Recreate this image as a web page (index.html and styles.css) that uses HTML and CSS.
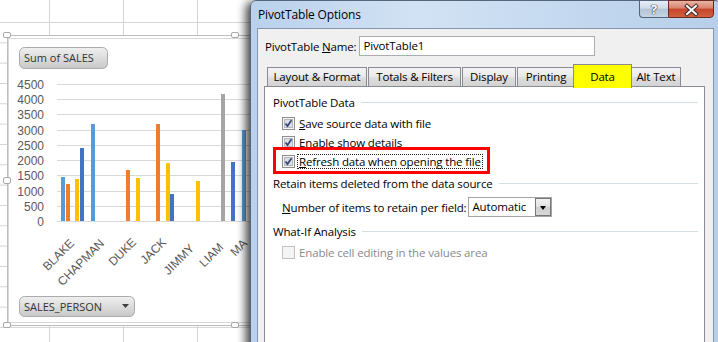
FILE: index.html
```html
<!DOCTYPE html>
<html lang="en">
  <head>
    <meta charset="UTF-8" />
    <meta name="viewport" content="width=device-width, initial-scale=1.0" />
    <title>PivotTable Options</title>
    <link rel="stylesheet" href="styles.css">
  </head>
  <body>
    <div class="screen">
      <div class="sheet-rows"></div>

      <!-- pivot chart sitting on the sheet -->
      <svg class="chart" width="262" height="342" viewBox="0 0 262 342">
        <defs>
          <linearGradient id="fieldBtn" x1="0" y1="0" x2="0" y2="1">
            <stop offset="0" stop-color="#f0f0f0" />
            <stop offset="1" stop-color="#c8c8c8" />
          </linearGradient>
        </defs>
        <rect x="7.5" y="35.5" width="460" height="290" fill="#fff" stroke="#bdbdbd" />
        <rect x="8.5" y="38.5" width="458" height="284" fill="none" stroke="#d9d9d9" />

        <rect class="handle" x="3.5" y="32.5" width="7" height="5" rx="1.5" />
        <rect class="handle" x="231.5" y="32.5" width="7" height="5" rx="1.5" />
        <rect class="handle" x="3.5" y="177.5" width="7" height="6" rx="1.5" />
        <rect class="handle" x="3.5" y="322.5" width="7" height="5" rx="1.5" />
        <rect class="handle" x="231.5" y="322.5" width="7" height="5" rx="1.5" />

        <rect x="19.5" y="47.5" width="88" height="21" rx="5" fill="url(#fieldBtn)" stroke="#ababab" />
        <text class="field-text" x="24" y="62">Sum of SALES</text>

        <g class="grid">
          <line x1="57" y1="84.5" x2="262" y2="84.5" />
          <line x1="57" y1="99.5" x2="262" y2="99.5" />
          <line x1="57" y1="114.5" x2="262" y2="114.5" />
          <line x1="57" y1="130.5" x2="262" y2="130.5" />
          <line x1="57" y1="145.5" x2="262" y2="145.5" />
          <line x1="57" y1="160.5" x2="262" y2="160.5" />
          <line x1="57" y1="175.5" x2="262" y2="175.5" />
          <line x1="57" y1="191.5" x2="262" y2="191.5" />
          <line x1="57" y1="206.5" x2="262" y2="206.5" />
          <line x1="57" y1="221.5" x2="262" y2="221.5" />
        </g>

        <g class="axis-text" text-anchor="end">
          <text x="44" y="89">4500</text>
          <text x="44" y="104">4000</text>
          <text x="44" y="119">3500</text>
          <text x="44" y="135">3000</text>
          <text x="44" y="150">2500</text>
          <text x="44" y="165">2000</text>
          <text x="44" y="180">1500</text>
          <text x="44" y="196">1000</text>
          <text x="44" y="211">500</text>
          <text x="44" y="226">0</text>
        </g>

        <g class="bars">
          <rect class="s1" x="61" y="177" width="4" height="44" />
          <rect class="s2" x="66" y="184" width="4" height="37" />
          <rect class="s4" x="75" y="179" width="4" height="42" />
          <rect class="s5" x="80" y="148" width="4" height="73" />
          <rect class="s1" x="91" y="124" width="4" height="97" />
          <rect class="s2" x="126" y="170" width="4" height="51" />
          <rect class="s4" x="136" y="178" width="4" height="43" />
          <rect class="s2" x="156" y="124" width="4" height="97" />
          <rect class="s4" x="166" y="163" width="4" height="58" />
          <rect class="s5" x="170" y="194" width="4" height="27" />
          <rect class="s4" x="196" y="181" width="4" height="40" />
          <rect class="s3" x="221" y="94" width="4" height="127" />
          <rect class="s5" x="231" y="162" width="4" height="59" />
          <rect class="s1" x="242" y="130" width="4" height="91" />
        </g>

        <g class="axis-text" text-anchor="end">
          <text transform="translate(75 244) rotate(-45)">BLAKE</text>
          <text transform="translate(105 244) rotate(-45)">CHAPMAN</text>
          <text transform="translate(137 243) rotate(-45)">DUKE</text>
          <text transform="translate(167 243) rotate(-45)">JACK</text>
          <text transform="translate(195 249) rotate(-45)">JIMMY</text>
          <text transform="translate(224 248) rotate(-45)">LIAM</text>
          <text transform="translate(248 244) rotate(-45)">MA</text>
        </g>

        <rect x="19.5" y="296.5" width="115" height="20" rx="5" fill="url(#fieldBtn)" stroke="#ababab" />
        <text class="field-text" x="24" y="311">SALES_PERSON</text>
        <path d="M122 304h7l-3.5 4z" fill="#404040" />
      </svg>

      <div class="dialog">
        <div class="titlebar">
          <span class="title">PivotTable Options</span>
          <div class="caption-buttons">
            <span class="btn-help">?</span>
            <span class="btn-close">
              <svg width="44" height="17" viewBox="0 0 44 17">
                <path d="M18 5l9 8M27 5l-9 8" stroke="#3a2a2a" stroke-width="4" stroke-linecap="square" />
                <path d="M18 5l9 8M27 5l-9 8" stroke="#fff" stroke-width="2" stroke-linecap="square" />
              </svg>
            </span>
          </div>
        </div>

        <div class="client">
          <div class="name-row">
            <span class="name-label">PivotTable <u>N</u>ame:</span>
            <div class="textbox">PivotTable1</div>
          </div>

          <div class="tabs">
            <div class="tab tab-layout">Layout &amp; Format</div>
            <div class="tab tab-totals">Totals &amp; Filters</div>
            <div class="tab tab-display">Display</div>
            <div class="tab tab-printing">Printing</div>
            <div class="tab tab-data selected">Data</div>
            <div class="tab tab-alt">Alt Text</div>
          </div>

          <div class="panel">
            <div class="group">PivotTable Data</div>

            <div class="option first">
              <svg class="cb" width="13" height="13" viewBox="0 0 13 13">
                <rect x=".5" y=".5" width="12" height="12" fill="#f6f6f6" stroke="#8f8f8f" />
                <rect x="2.5" y="2.5" width="8" height="8" fill="#dadde2" stroke="#b2b7bd" />
                <path d="M3.5 6.5l2 2.6 4-5.8" fill="none" stroke="#33457a" stroke-width="1.7" />
              </svg>
              <span><u>S</u>ave source data with file</span>
            </div>
            <div class="option">
              <svg class="cb" width="13" height="13" viewBox="0 0 13 13">
                <rect x=".5" y=".5" width="12" height="12" fill="#f6f6f6" stroke="#8f8f8f" />
                <rect x="2.5" y="2.5" width="8" height="8" fill="#dadde2" stroke="#b2b7bd" />
                <path d="M3.5 6.5l2 2.6 4-5.8" fill="none" stroke="#33457a" stroke-width="1.7" />
              </svg>
              <span><u>E</u>nable show details</span>
            </div>
            <div class="option marked">
              <svg class="cb" width="13" height="13" viewBox="0 0 13 13">
                <rect x=".5" y=".5" width="12" height="12" fill="#f6f6f6" stroke="#8f8f8f" />
                <rect x="2.5" y="2.5" width="8" height="8" fill="#dadde2" stroke="#b2b7bd" />
                <path d="M3.5 6.5l2 2.6 4-5.8" fill="none" stroke="#33457a" stroke-width="1.7" />
              </svg>
              <span class="focus"><u>R</u>efresh data when opening the file</span>
            </div>

            <div class="group group-retain">Retain items deleted from the data source</div>

            <div class="option field">
              <span class="field-label"><u>N</u>umber of items to retain per field:</span>
              <div class="combo">
                <span class="combo-value">Automatic</span>
                <span class="combo-drop"></span>
              </div>
            </div>

            <div class="group group-whatif">What-If Analysis</div>

            <div class="option disabled">
              <svg class="cb" width="13" height="13" viewBox="0 0 13 13">
                <rect x=".5" y=".5" width="12" height="12" fill="#f4f4f4" stroke="#c2c2c2" />
              </svg>
              <span>Enable cell editing in the values area</span>
            </div>
          </div>
        </div>
      </div>
    </div>
  </body>
</html>
```

FILE: styles.css
```css
body {
  margin: 0;
  font-family: "Open Sans", "Noto Sans", sans-serif;
  font-size: 11.5px;
  letter-spacing: -0.15px;
  color: #000;
}
.screen {
  position: relative;
  width: 718px;
  height: 342px;
  overflow: hidden;
  background-color: #fff;
  background-image: linear-gradient(to right, #d4d4d4 1px, transparent 1px);
  background-size: 74px 100%;
  background-position: 49px 0;
}
.sheet-rows {
  margin-top: 22px;
  height: 320px;
  background-image: linear-gradient(to bottom, #d4d4d4 1px, transparent 1px);
  background-size: 100% 20.33px;
}

/* chart */
.chart {
  position: absolute;
  left: 0;
  top: 0;
  letter-spacing: 0;
}
.handle {
  fill: #fff;
  stroke: #a9a9a9;
}
.field-text {
  font-family: "Open Sans", sans-serif;
  font-size: 11px;
  fill: #333;
}
.grid line {
  stroke: #d9d9d9;
  stroke-width: 1;
}
.axis-text {
  font-family: "Liberation Sans", Arial, sans-serif;
  font-size: 12px;
  fill: #595959;
}
.s1 { fill: #5b9bd5; }
.s2 { fill: #ed7d31; }
.s3 { fill: #a5a5a5; }
.s4 { fill: #ffc000; }
.s5 { fill: #4472c4; }

/* dialog window */
.dialog {
  position: absolute;
  left: 250px;
  top: 0;
  width: 471px;
  height: 360px;
  box-sizing: border-box;
  padding: 0 6px;
  border: 1px solid #56677d;
  border-radius: 6px 6px 0 0;
  background: linear-gradient(to right, #b9d1ec, #d2e2f4 35%, #c3d8ef 70%, #b7cfea);
  box-shadow: -4px 2px 10px rgba(0, 0, 0, 0.75);
  white-space: nowrap;
}
.titlebar {
  height: 27px;
  display: flex;
  justify-content: space-between;
  align-items: flex-start;
}
.title {
  padding: 6px 0 0 1px;
  line-height: 15px;
  font-size: 12px;
}
.caption-buttons {
  display: flex;
  margin-top: -1px;
}
.btn-help,
.btn-close {
  height: 18px;
  box-sizing: border-box;
  display: flex;
  align-items: center;
  justify-content: center;
}
.btn-help {
  width: 29px;
  border: 1px solid #52647c;
  border-right: none;
  border-radius: 0 0 0 4px;
  background: linear-gradient(#e6eef7, #cfdbe8 45%, #b3c4d6 50%, #c6d5e4);
  color: #fff;
  font-weight: bold;
  font-size: 13px;
  text-shadow: 0 0 1px #26354a, 0 0 1px #26354a, 0 0 1px #26354a;
}
.btn-close {
  width: 46px;
  border: 1px solid #6b2a20;
  border-radius: 0 0 4px 0;
  background: linear-gradient(#eab2a4, #d9836c 45%, #c5442c 50%, #d2613f);
}

.client {
  height: 330px;
  border: 1px solid #8595aa;
  background-color: #f0f0f0;
}
.name-row {
  display: flex;
  align-items: center;
  gap: 3px;
  margin: 7px 0 0 7px;
  height: 20px;
}
.textbox {
  width: 236px;
  height: 20px;
  box-sizing: border-box;
  border: 1px solid #abadb3;
  background-color: #fff;
  padding: 1px 3px;
  line-height: 16px;
}

.tabs {
  display: flex;
  align-items: flex-end;
  height: 22px;
  margin-top: 8px;
  padding-left: 9px;
}
.tab {
  position: relative;
  height: 19px;
  box-sizing: border-box;
  border: 1px solid #898c95;
  border-bottom: none;
  margin-right: 1px;
  padding-top: 1px;
  text-align: center;
  line-height: 15px;
  background: linear-gradient(#f3f3f3, #ebebeb 45%, #dddddd 55%, #d3d3d3);
}
.tab-layout { width: 100px; }
.tab-totals { width: 93px; }
.tab-display { width: 54px; }
.tab-printing { width: 58px; margin-right: 0; }
.tab-data { width: 59px; margin-left: -2px; margin-right: 0; }
.tab-alt { width: 50px; margin-left: -1px; }
.tab.selected {
  z-index: 1;
  height: 24px;
  margin-bottom: -2px;
  padding-top: 4px;
  background: #ffff00;
}

.panel {
  height: 260px;
  margin: 0 8px 0 6px;
  padding: 8px 6px 0 8px;
  border: 1px solid #898c95;
  background-color: #fff;
}
.group {
  display: flex;
  align-items: center;
  gap: 6px;
  line-height: 15px;
}
.group::after {
  content: "";
  flex: 1;
  height: 1px;
  background-color: #d5dfe5;
}
.group-retain {
  margin-top: 5px;
}
.group-whatif {
  margin-top: 7px;
}
.option {
  display: flex;
  align-items: center;
  gap: 4px;
  height: 19px;
  margin-left: 9px;
  line-height: 15px;
}
.option.first {
  margin-top: 4px;
}
.option u,
.name-label u {
  text-underline-offset: 1px;
}
.marked {
  position: relative;
}
.marked::before {
  content: "";
  position: absolute;
  left: -9px;
  top: -5px;
  width: 217px;
  height: 27px;
  box-sizing: border-box;
  border: 3px solid #f00;
}
.focus {
  margin-left: -2px;
  padding: 0 1px;
  border: 1px dotted #222;
  line-height: 13px;
}
.field {
  height: 20px;
  margin-top: 6px;
  gap: 2px;
}
.combo {
  display: flex;
  width: 84px;
  height: 20px;
  box-sizing: border-box;
  border: 1px solid #a5a5a5;
  background-color: #fff;
}
.combo-value {
  flex: 1;
  padding-left: 3px;
  line-height: 18px;
}
.combo-drop {
  position: relative;
  width: 16px;
  box-sizing: border-box;
  border: 1px solid #777;
  background: linear-gradient(#f2f2f2, #e0e0e0 50%, #cfcfcf 51%, #d8d8d8);
}
.combo-drop::after {
  content: "";
  position: absolute;
  left: 4px;
  top: 7px;
  border-left: 3.5px solid transparent;
  border-right: 3.5px solid transparent;
  border-top: 4px solid #000;
}
.disabled {
  margin-top: 4px;
  color: #8a8a8a;
}
```
